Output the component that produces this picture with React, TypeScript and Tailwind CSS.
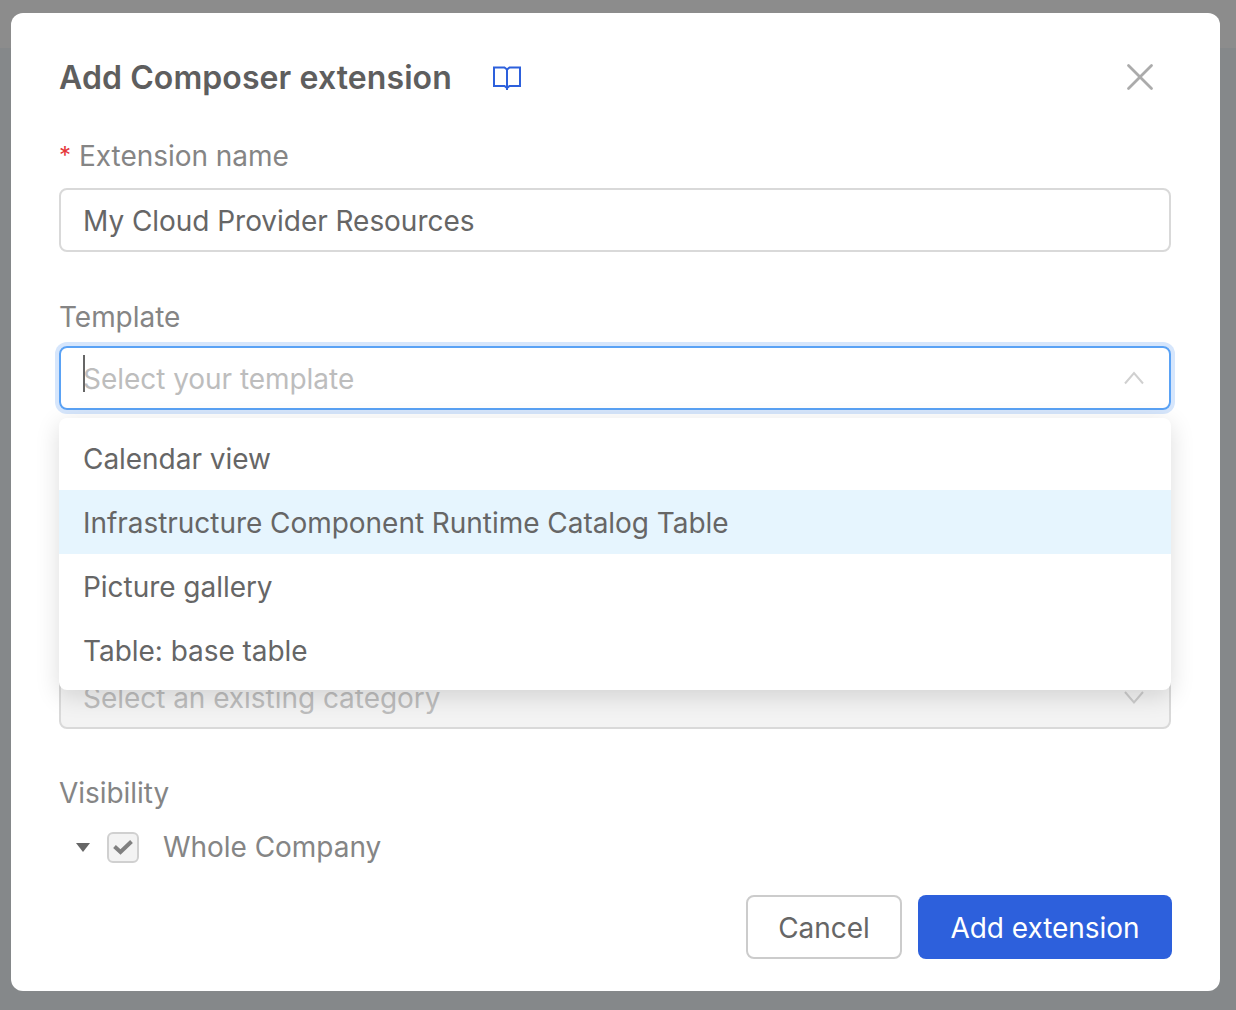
import { X } from "lucide-react";

const templates = [
  "Calendar view",
  "Infrastructure Component Runtime Catalog Table",
  "Picture gallery",
  "Table: base table",
];

function BookIcon() {
  return (
    <svg width="28" height="24" viewBox="0 0 28 24" fill="none" stroke="#2d60dc" strokeWidth="2">
      <path d="M1 1.5H11.5L14 3.5L16.5 1.5H27V20H16.5L14 22L11.5 20H1V1.5Z" />
      <path d="M14 3.5V24" />
    </svg>
  );
}

function CheckMark() {
  return (
    <svg width="20" height="16" viewBox="0 0 20 16" fill="none" stroke="#808080" strokeWidth="4">
      <path d="M1.5 7.5L7.5 13L18.5 2.5" />
    </svg>
  );
}

function Chevron({ up, color }: { up?: boolean; color: string }) {
  return (
    <svg width="20" height="14" viewBox="0 0 20 14" fill="none" stroke={color} strokeWidth="2">
      <path d={up ? "M1 12.5L10 2L19 12.5" : "M1 1L10 11.5L19 1"} />
    </svg>
  );
}

export default function App() {
  return (
    <div className="relative h-[1010px] w-[1236px] overflow-hidden bg-[#85888a] pl-[11px] pt-[13px] font-[Inter,sans-serif]">
      {/* Page header seen through the backdrop */}
      <div className="absolute inset-x-0 top-0 h-[48px] bg-[#8c8c8c]" />

      <div className="relative h-[978px] w-[1209px] rounded-[12px] bg-white pl-[48px] pr-[49px] pt-[33px] tracking-[-0.04px]">
        {/* Header */}
        <div className="flex h-[64px] items-center justify-between">
          <div className="flex items-center gap-[41px]">
            <h2 className="text-[32px] font-semibold tracking-[0.09px] text-[#5e5e5e]">Add Composer extension</h2>
            <BookIcon />
          </div>
          <X className="mb-[2px] mr-[8px] h-[46px] w-[46px] text-[#ababab]" strokeWidth={1.45} />
        </div>

        {/* Extension name */}
        <div className="mt-[26px] flex h-[40px] items-center text-[28px] text-[#858585]">
          <span className="mr-[8px] text-[24px] text-[#e5383b]">*</span>
          Extension name
        </div>
        <div className="mt-[12px] flex h-[64px] items-center rounded-[8px] border-2 border-[#d9d9d9] px-[22px] pt-[1px] text-[28px] text-[#666666]">
          My Cloud Provider Resources
        </div>

        {/* Template */}
        <div className="mt-[45px] flex h-[40px] items-center text-[28px] text-[#858585]">Template</div>
        <div className="relative mt-[9px]">
          <div className="flex h-[64px] items-center justify-between rounded-[8px] border-2 border-[#5aa2f5] pl-[22px] pr-[25px] text-[28px] text-[#bdbdbd] shadow-[0_0_0_4px_#d6e6fc]">
            <span className="relative pt-[2px]">
              <span className="absolute left-0 top-[-1px] h-[37px] w-[2px] bg-[#666666]" />
              Select your template
            </span>
            <Chevron up color="#d0d0d0" />
          </div>

          {/* Dropdown */}
          <div className="absolute left-0 right-0 top-[72px] z-10 rounded-[8px] bg-white py-[8px] shadow-[0_6px_24px_rgba(0,0,0,0.14)]">
            {templates.map((t, i) => (
              <div
                key={t}
                className={
                  i === 1
                    ? "flex h-[64px] items-center bg-[#e6f5fe] px-[24px] pt-[1px] text-[28px] text-[#666666]"
                    : "flex h-[64px] items-center px-[24px] pt-[1px] text-[28px] text-[#666666]"
                }
              >
                {t}
              </div>
            ))}
          </div>
        </div>

        {/* Category, mostly covered by the dropdown */}
        <div className="mt-[256px] flex h-[63px] items-center justify-between rounded-[8px] border-2 border-[#d9d9d9] bg-[#f3f3f3] pl-[22px] pr-[25px] text-[28px] text-[#bdbdbd]">
          Select an existing category
          <Chevron color="#cccccc" />
        </div>

        {/* Visibility */}
        <div className="mt-[44px] flex h-[40px] items-center text-[28px] text-[#858585]">Visibility</div>
        <div className="mt-[14px] flex h-[40px] items-center pl-[17px] text-[28px] text-[#858585]">
          <span className="h-0 w-0 border-x-[7px] border-t-[9px] border-x-transparent border-t-[#666666]" />
          <span className="ml-[17px] flex h-[31px] w-[32px] items-center justify-center rounded-[6px] border-2 border-[#d0d0d0] bg-[#f3f3f3]">
            <CheckMark />
          </span>
          <span className="ml-[24px]">Whole Company</span>
        </div>

        {/* Footer */}
        <div className="mr-[-1px] mt-[28px] flex justify-end gap-[16px]">
          <button className="h-[64px] w-[156px] rounded-[8px] border-2 border-[#cccccc] bg-white pt-[2px] text-[28px] text-[#666666]">
            Cancel
          </button>
          <button className="h-[64px] w-[254px] rounded-[8px] bg-[#2d60dc] pt-[2px] text-[28px] text-white">
            Add extension
          </button>
        </div>
      </div>
    </div>
  );
}
